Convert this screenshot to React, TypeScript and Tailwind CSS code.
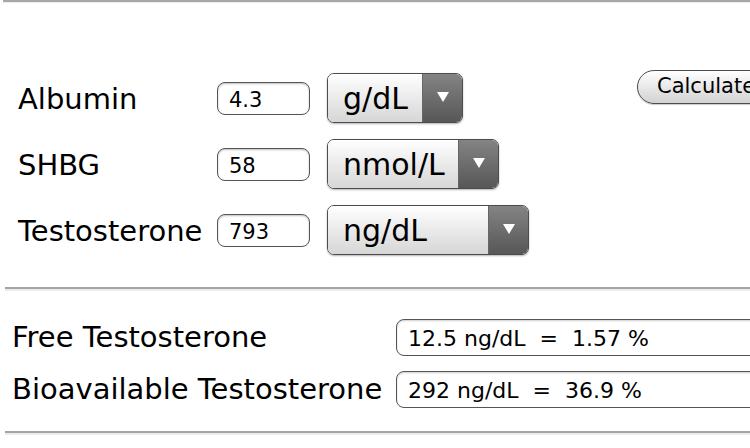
import React from 'react';

interface InputRowProps {
  label: string;
  value: string;
  unit: string;
  selectWidth: string;
}

const Arrow = () => (
  <svg width="12" height="10" viewBox="0 0 12 10" className="block">
    <polygon points="0,0 12,0 6,10" fill="#ffffff" />
  </svg>
);

const InputRow: React.FC<InputRowProps> = ({ label, value, unit, selectWidth }) => (
  <div className="flex items-center h-[66px]">
    <div className="w-[199px] pt-[4px] text-[29px] text-black">{label}</div>
    <div className="w-[93px] h-[33px] flex items-center pl-[11px] pt-[5px] border border-[#555] rounded-[8px] bg-white shadow-[inset_0_1px_2px_rgba(0,0,0,0.25)] text-[21px] text-black">
      {value}
    </div>
    <div
      className={`ml-[17px] h-[50px] flex border border-[#4d4d4d] rounded-[7px] overflow-hidden shadow-[0_1px_2px_rgba(0,0,0,0.3)] ${selectWidth}`}
    >
      <div className="flex-1 flex items-center pl-[15px] pt-[1px] bg-gradient-to-b from-white to-[#d6d6d6] text-[30px] text-black">
        {unit}
      </div>
      <div className="w-[40px] flex justify-center pt-[18px] bg-gradient-to-b from-[#848484] to-[#575757] border-l border-[#666]">
        <Arrow />
      </div>
    </div>
  </div>
);

const ResultRow: React.FC<{ label: string; value: string }> = ({ label, value }) => (
  <div className="flex items-center h-[52px]">
    <div className="w-[384px] pt-[2px] text-[29px] text-black">{label}</div>
    <div className="w-[440px] h-[37px] flex items-center pl-[11px] pt-[3px] border border-[#555] rounded-[8px] bg-white shadow-[inset_0_1px_2px_rgba(0,0,0,0.2)] text-[22px] text-black whitespace-pre">
      {value}
    </div>
  </div>
);

const Divider = () => (
  <div className="ml-[5px]">
    <div className="h-[2px] bg-[#a3a3a3]" />
    <div className="h-[2px] bg-[#ececec]" />
  </div>
);

export default function App() {
  return (
    <div className="w-[750px] h-[448px] overflow-hidden bg-white font-['DejaVu_Sans',Verdana,sans-serif]">
      <div className="w-[900px]">
        <div className="ml-[3px]">
          <div className="h-[2px] bg-[#a8a8a8]" />
          <div className="h-[1px] bg-[#ececec]" />
        </div>

        <div className="flex pt-[62px] pl-[18px]">
          <div className="flex flex-col w-[619px]">
            <InputRow label="Albumin" value="4.3" unit="g/dL" selectWidth="w-[136px]" />
            <InputRow label="SHBG" value="58" unit="nmol/L" selectWidth="w-[172px]" />
            <InputRow label="Testosterone" value="793" unit="ng/dL" selectWidth="w-[202px]" />
          </div>
          <div className="pt-[5px]">
            <button className="h-[34px] px-[19px] border border-[#4d4d4d] rounded-full bg-gradient-to-b from-white to-[#d2d2d2] text-[21px] text-black shadow-[0_1px_1px_rgba(0,0,0,0.2)]">
              Calculate
            </button>
          </div>
        </div>

        <div className="mt-[24px]">
          <Divider />
        </div>

        <div className="pl-[12px] pt-[20px] pb-[16px]">
          <ResultRow label="Free Testosterone" value="12.5 ng/dL  =  1.57 %" />
          <ResultRow label="Bioavailable Testosterone" value="292 ng/dL  =  36.9 %" />
        </div>

        <Divider />
      </div>
    </div>
  );
}
